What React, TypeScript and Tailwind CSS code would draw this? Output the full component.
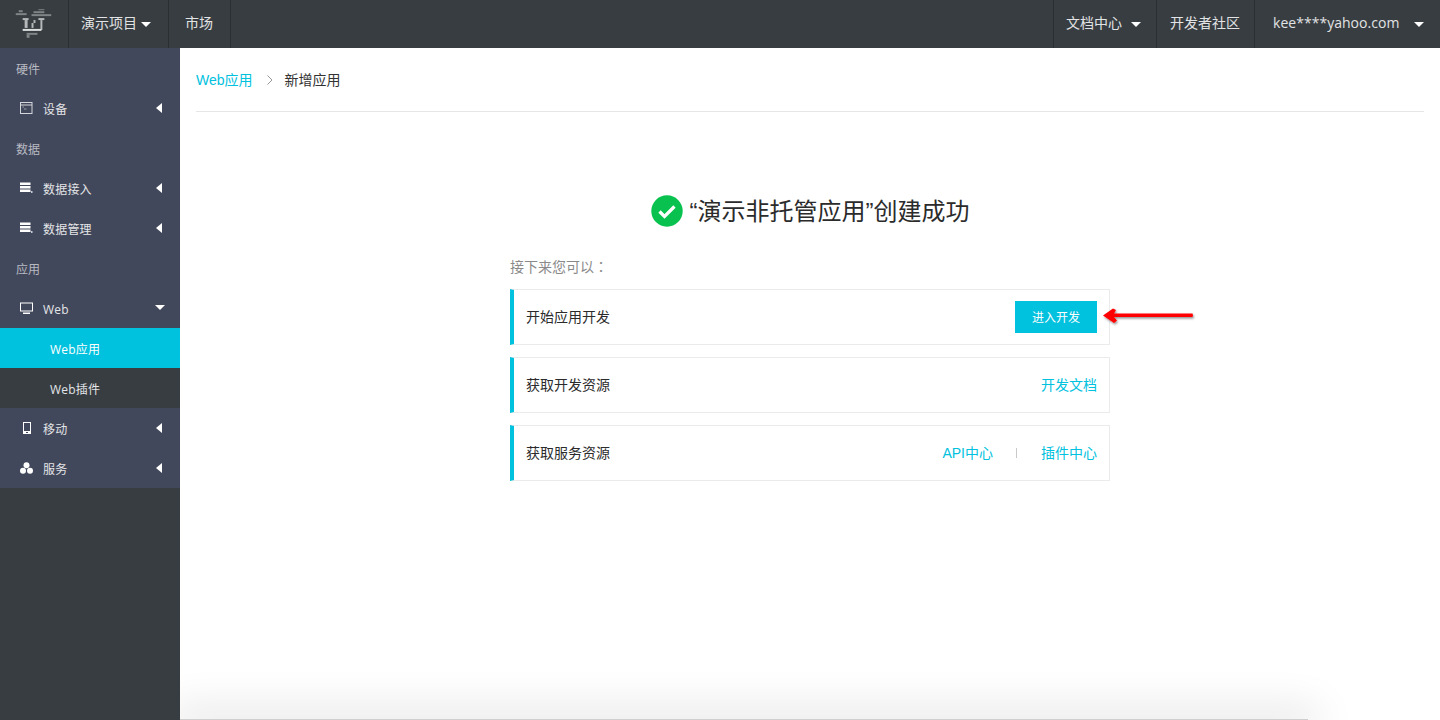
import React from "react";

const FONT = { fontFamily: '"Open Sans", "Noto Sans CJK SC", sans-serif' };
const MAIN_FONT = { fontFamily: '"Liberation Sans", "Noto Sans CJK SC", sans-serif' };

function Caret({ dir = "down", className = "" }: { dir?: "down" | "left"; className?: string }) {
  if (dir === "left")
    return (
      <svg width="6" height="10" viewBox="0 0 6 10" className={className}>
        <path d="M6 0v10L0 5z" fill="#ffffff" />
      </svg>
    );
  return (
    <svg width="10" height="5" viewBox="0 0 10 5" className={className}>
      <path d="M0 0h10L5 5z" fill="#ffffff" />
    </svg>
  );
}

function Logo() {
  return (
    <svg width="69" height="48" viewBox="0 0 69 48">
      <g fill="#7f8585">
        <rect x="19" y="10" width="4" height="2" />
        <rect x="16" y="13" width="11" height="2" />
        <rect x="34" y="11" width="11" height="2" />
        <rect x="39" y="9" width="6" height="1" />
        <rect x="32" y="14" width="20" height="2" />
        <rect x="27" y="33" width="11" height="2" />
        <rect x="27" y="35" width="3" height="3" />
      </g>
      <g fill="#b4b8b8">
        <rect x="23" y="18" width="6" height="2" />
        <rect x="25" y="20" width="3" height="8" />
        <rect x="32" y="23" width="2" height="5" />
        <rect x="34" y="20" width="2" height="3" />
        <rect x="39" y="18" width="6" height="2" />
        <rect x="41" y="20" width="2" height="10" />
      </g>
      <rect x="23" y="29" width="19" height="2" fill="#dcdede" />
    </svg>
  );
}

function IconWindow() {
  return (
    <svg width="13" height="12" viewBox="0 0 13 12" fill="none">
      <rect x="0.5" y="0.5" width="11.5" height="11" stroke="#d5d6db" />
      <path d="M0 3h12" stroke="#d5d6db" />
      <path d="M2.5 5h1.5M4 7h2.5" stroke="#9a9ca8" />
    </svg>
  );
}

function IconData() {
  return (
    <svg width="13" height="12" viewBox="0 0 13 12" fill="#ffffff">
      <rect x="0" y="0.5" width="10.5" height="2.5" />
      <rect x="0" y="4" width="10.5" height="2.5" />
      <rect x="0" y="7.5" width="10.5" height="2.5" />
      <rect x="11" y="9" width="1.5" height="2" fill="#c9cad1" />
    </svg>
  );
}

function IconMonitor() {
  return (
    <svg width="13" height="12" viewBox="0 0 13 12" fill="none">
      <rect x="0.5" y="1" width="12" height="8" stroke="#ffffff" />
      <rect x="3" y="10.5" width="7" height="1.5" fill="#ffffff" />
    </svg>
  );
}

function IconPhone() {
  return (
    <svg width="8" height="12" viewBox="0 0 8 12" fill="none">
      <rect x="0.5" y="0.5" width="7" height="11" stroke="#ffffff" />
      <rect x="0" y="9" width="8" height="3" fill="#ffffff" />
      <rect x="3" y="10" width="2" height="1" fill="#42485b" />
    </svg>
  );
}

function IconCubes() {
  return (
    <svg width="13" height="12" viewBox="0 0 13 12" fill="#ffffff">
      <circle cx="6.5" cy="3.2" r="3" />
      <circle cx="3" cy="8.7" r="3" />
      <circle cx="10" cy="8.7" r="3" />
    </svg>
  );
}

function SectionLabel({ children }: { children: React.ReactNode }) {
  return <div className="h-10 pl-4 pt-[3px] flex items-center text-xs text-[#b8bac2]">{children}</div>;
}

function NavItem({
  icon,
  label,
  caret = "left",
}: {
  icon: React.ReactNode;
  label: string;
  caret?: "left" | "down";
}) {
  return (
    <div className="h-10 flex items-center text-xs text-[#e4e5e8]">
      <div className="w-[43px] pl-5 flex items-center shrink-0">
        <div className="w-[13px] flex justify-center">{icon}</div>
      </div>
      <span className="flex-1 pt-[3px] tracking-[0.2px]">{label}</span>
      <div className="w-[10px] mr-[15px] flex justify-center">
        <Caret dir={caret} className={caret === "down" ? "-translate-y-[1px]" : "-translate-x-[1px]"} />
      </div>
    </div>
  );
}

function SubItem({ label, active = false }: { label: string; active?: boolean }) {
  return (
    <div
      className={
        active
          ? "h-10 pl-[50px] pt-[3px] flex items-center text-xs tracking-[0.2px] text-white bg-[#00c1de]"
          : "h-10 pl-[50px] pt-[3px] flex items-center text-xs tracking-[0.2px] text-[#e4e5e8] bg-[#373d41]"
      }
    >
      {label}
    </div>
  );
}

function Sidebar() {
  return (
    <aside className="w-[180px] shrink-0 bg-[#373d41] relative z-10">
      <div className="bg-[#42485b]">
        <SectionLabel>硬件</SectionLabel>
        <NavItem icon={<IconWindow />} label="设备" />
        <SectionLabel>数据</SectionLabel>
        <NavItem icon={<IconData />} label="数据接入" />
        <NavItem icon={<IconData />} label="数据管理" />
        <SectionLabel>应用</SectionLabel>
        <NavItem icon={<IconMonitor />} label="Web" caret="down" />
        <SubItem label="Web应用" active />
        <SubItem label="Web插件" />
        <NavItem icon={<IconPhone />} label="移动" />
        <NavItem icon={<IconCubes />} label="服务" />
      </div>
    </aside>
  );
}

function TopCell({ children, className = "" }: { children: React.ReactNode; className?: string }) {
  return <div className={"h-12 flex items-center border-r border-[#2a2f32] " + className}>{children}</div>;
}

function TopBar() {
  return (
    <header className="h-12 bg-[#373d41] flex items-stretch text-sm text-[#e2e3e4]">
      <TopCell className="w-[69px]">
        <Logo />
      </TopCell>
      <TopCell className="w-[100px] pl-3 gap-1">
        <span className="pb-[2px]">演示项目</span>
        <Caret />
      </TopCell>
      <TopCell className="w-[62px] pl-4">
        <span className="pb-[2px]">市场</span>
      </TopCell>
      <div className="flex-1" />
      <TopCell className="w-[104px] pl-3 border-l gap-[9px]">
        <span className="pb-[2px]">文档中心</span>
        <Caret />
      </TopCell>
      <TopCell className="w-[98px] pl-[13px]">
        <span className="pb-[2px]">开发者社区</span>
      </TopCell>
      <div className="w-[185px] pl-[18px] flex items-center">
        <span className="w-[141px] pb-[2px] tracking-[0.03px]">kee****yahoo.com</span>
        <Caret />
      </div>
    </header>
  );
}

function Row({ title, children }: { title: string; children: React.ReactNode }) {
  return (
    <div className="h-14 border border-l-4 border-[#ebebeb] border-l-[#00c1de] pl-3 pr-3 flex items-center justify-between text-sm text-[#2b2b2b]">
      <span>{title}</span>
      <div className="flex items-center">{children}</div>
    </div>
  );
}

function Main() {
  return (
    <main className="flex-1 bg-white px-4 relative overflow-hidden" style={MAIN_FONT}>
      <div className="h-[64px] border-b border-[#e6e6e6] flex items-center text-sm">
        <span className="text-[#00c1de]">Web应用</span>
        <svg width="8" height="10" viewBox="0 0 8 10" fill="none" className="ml-[13px] mr-[11px]">
          <path d="M1.5 0.5L6 5 1.5 9.5" stroke="#999999" />
        </svg>
        <span className="text-[#333333]">新增应用</span>
      </div>
      <div className="mt-[81px] flex items-center justify-center h-9">
        <svg width="32" height="32" viewBox="0 0 32 32" className="mr-[7px]">
          <circle cx="16" cy="16" r="15.7" fill="#09c14f" />
          <path d="M8.5 16.5l5 5 10-10" stroke="#ffffff" strokeWidth="3.2" fill="none" />
        </svg>
        <span className="text-2xl text-[#2b2b2b] pt-[1px]">“演示非托管应用”创建成功</span>
      </div>
      <div className="w-[600px] mx-auto">
        <div className="mt-[26px] h-[36px] pt-[1px] text-sm text-[#8a8a8a]">
          接下来您可以<span className="font-['Noto_Sans_CJK_TC']">：</span>
        </div>
        <div className="relative -mt-[2px] flex flex-col gap-3">
          <Row title="开始应用开发">
            <button className="w-[82px] h-8 pt-[1px] bg-[#00c1de] text-white text-xs">进入开发</button>
          </Row>
          <Row title="获取开发资源">
            <span className="text-[#00c1de]">开发文档</span>
          </Row>
          <Row title="获取服务资源">
            <span className="text-[#00c1de]">API中心</span>
            <span className="ml-[23px] mr-[24px] w-px h-[10px] bg-[#c8c8c8]" />
            <span className="text-[#00c1de]">插件中心</span>
          </Row>
          <svg width="92" height="18" viewBox="0 0 92 18" className="absolute left-[592px] top-[18px] overflow-visible">
            <defs>
              <filter id="s" x="-10%" y="-50%" width="120%" height="220%">
                <feDropShadow dx="1" dy="1.5" stdDeviation="1.2" floodColor="#000000" floodOpacity="0.45" />
              </filter>
            </defs>
            <path
              filter="url(#s)"
              fill="#ff0000"
              d="M1 8.5L11 1.5 14 3 12 6.5H90.5Q91.5 8.5 90.5 10H12L15 13.5 12 16z"
            />
          </svg>
        </div>
      </div>
      <div className="absolute left-0 bottom-0 w-[1128px] h-px bg-[#cfcfcf] shadow-[0_0_40px_10px_rgba(0,0,0,0.13)]" />
    </main>
  );
}

export default function App() {
  return (
    <div className="relative h-[720px] overflow-hidden flex flex-col bg-white" style={FONT}>
      <TopBar />
      <div className="flex-1 flex min-h-0">
        <Sidebar />
        <Main />
      </div>
    </div>
  );
}
